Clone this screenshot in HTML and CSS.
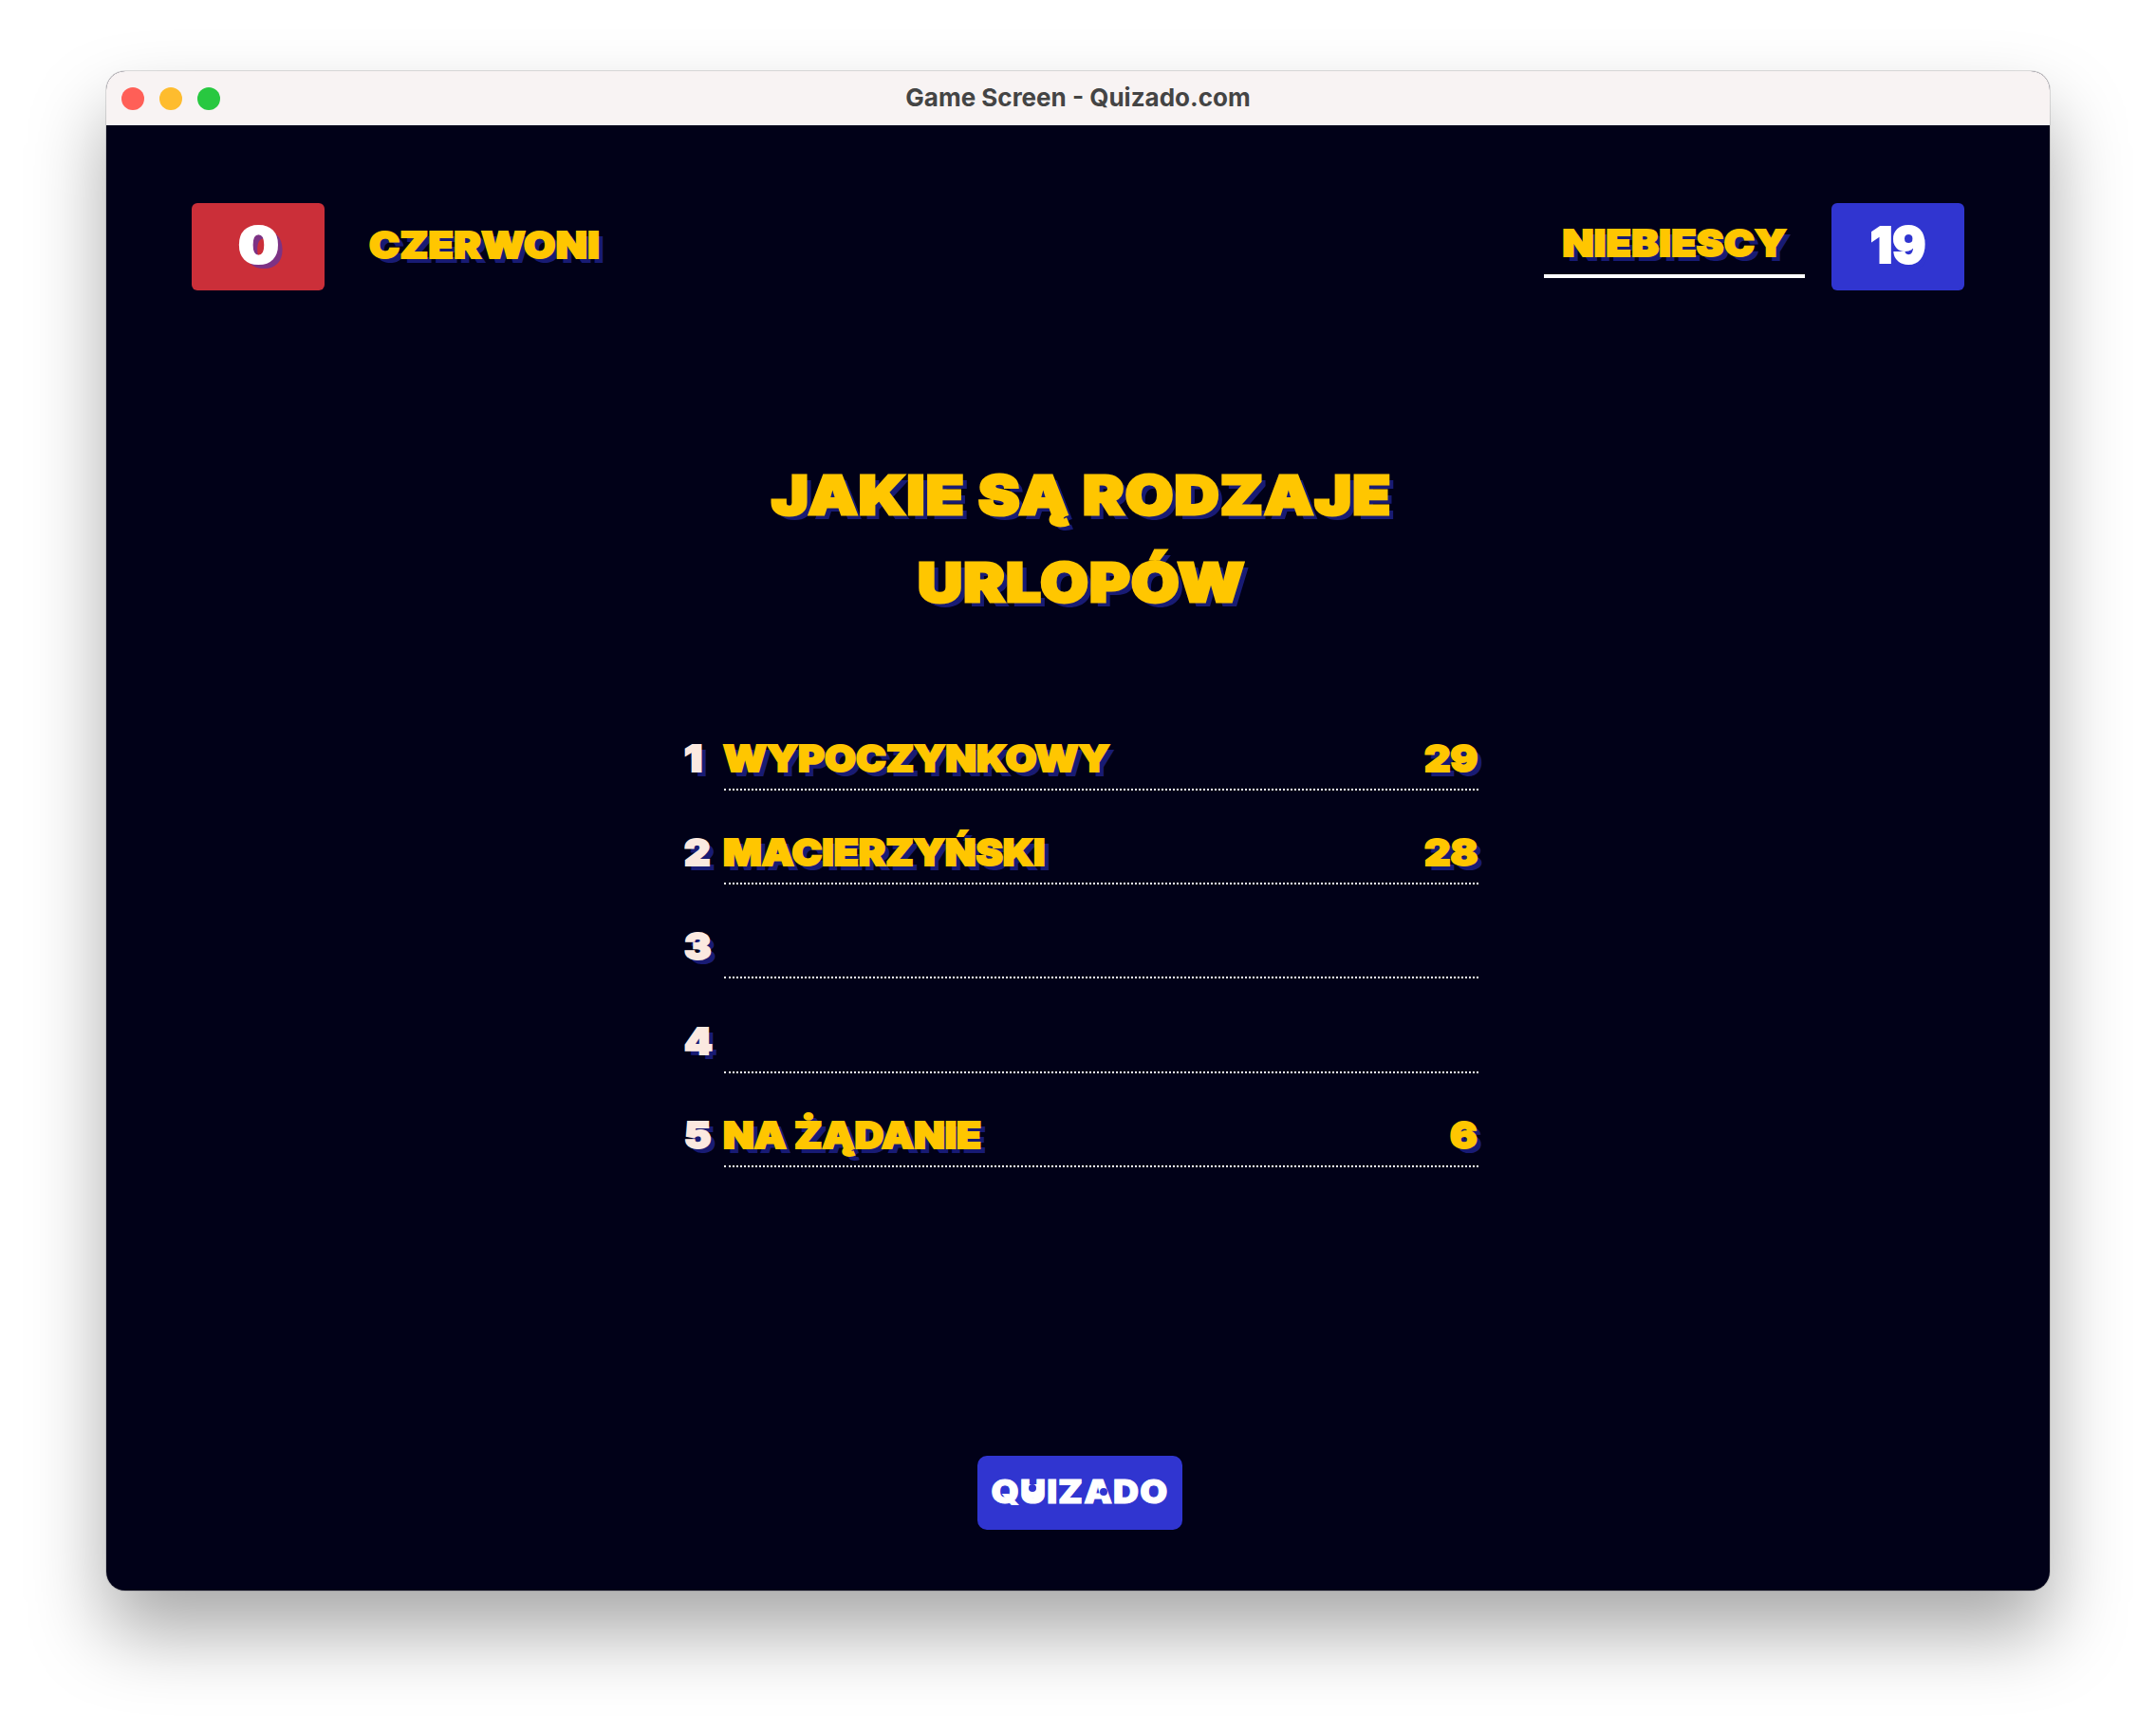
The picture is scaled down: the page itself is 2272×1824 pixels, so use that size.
FILE: index.html
```html
<!DOCTYPE html>
<html lang="pl">
<head>
<meta charset="utf-8">
<title>Game Screen - Quizado.com</title>
<link rel="stylesheet" href="styles.css">
</head>
<body>
<div class="window">
  <header class="titlebar">
    <div class="lights">
      <span class="light light-red"></span>
      <span class="light light-yellow"></span>
      <span class="light light-green"></span>
    </div>
    <div class="window-title">Game Screen - Quizado.com</div>
  </header>
  <main class="game">
    <section class="teams">
      <div class="team">
        <div class="score score-red"><span class="zero">0</span></div>
        <div class="team-name team-left"><span class="wide">CZERWONI</span></div>
      </div>
      <div class="team">
        <div class="team-name team-right"><span class="wide wide-center">NIEBIESCY</span></div>
        <div class="score score-blue">19</div>
      </div>
    </section>
    <h1 class="question">JAKIE SĄ RODZAJE<br>URLOPÓW</h1>
    <ol class="answers">
      <li class="answer"><span class="num">1</span><span class="line"><span class="text">WYPOCZYNKOWY</span><span class="pts">29</span></span></li>
      <li class="answer"><span class="num">2</span><span class="line"><span class="text">MACIERZYŃSKI</span><span class="pts">28</span></span></li>
      <li class="answer"><span class="num">3</span><span class="line"></span></li>
      <li class="answer"><span class="num">4</span><span class="line"></span></li>
      <li class="answer"><span class="num">5</span><span class="line"><span class="text">NA ŻĄDANIE</span><span class="pts">6</span></span></li>
    </ol>
    <div class="logo-wrap">
      <div class="logo"><span class="logo-text">QUIZADO</span><i class="patch"></i><i class="dot dot-u"></i><i class="dot dot-a"></i></div>
    </div>
  </main>
</div>
</body>
</html>
```
FILE: styles.css
```css
* { box-sizing: border-box; }
html, body { margin: 0; background: #fff; }
body {
  width: 2272px;
  height: 1824px;
  padding: 75px 112px 148px;
  font-family: Inter, "Liberation Sans", sans-serif;
  overflow: hidden;
}
.window {
  width: 2048px;
  height: 1601px;
  border-radius: 20px;
  overflow: hidden;
  display: flex;
  flex-direction: column;
  background: #010118;
  box-shadow: 0 0 0 1px rgba(0,0,0,.12), 0 44px 80px rgba(0,0,0,.34);
}
.titlebar {
  height: 57px;
  background: #f8f3f3;
  display: flex;
  align-items: center;
  position: relative;
  flex: none;
}
.lights { display: flex; gap: 16px; padding-left: 16px; }
.light { width: 24px; height: 24px; border-radius: 50%; display: block; }
.light-red { background: #ff5f57; }
.light-yellow { background: #febc2e; }
.light-green { background: #28c840; }
.window-title {
  position: absolute;
  left: 0; right: 0; top: 0;
  line-height: 56px;
  text-align: center;
  font-size: 26px;
  font-weight: 700;
  color: #444;
}
.game { flex: 1; display: flex; flex-direction: column; padding: 82px 90px 0; }
.teams { display: flex; justify-content: space-between; }
.team { display: flex; align-items: center; }
.score {
  width: 140px;
  height: 92px;
  padding-bottom: 4px;
  border-radius: 6px;
  display: flex;
  align-items: center;
  justify-content: center;
  color: #fff;
  font-size: 52px;
  font-weight: 900;
  -webkit-text-stroke: 2px #fff;
  text-shadow: 5px 5px 0 rgba(48,53,208,.5);
}
.zero { display: inline-block; transform: scaleX(1.16); }
.score-red { background: #cb2f39; }
.score-blue { background: #3035d0; }
.team-name, .question, .text, .pts, .num {
  font-weight: 900;
  color: #ffc600;
  text-shadow: 5px 5px 0 rgba(48,53,208,.5);
  -webkit-text-stroke: 2px currentColor;
}
.team-name { font-size: 38px; line-height: 48px; }
.wide { display: inline-block; transform: scaleX(1.13); transform-origin: left center; letter-spacing: .3px; }
.wide-center { transform-origin: center; }
.team-left { margin-left: 47px; margin-bottom: 5px; }
.team-right {
  margin-right: 28px;
  width: 275px;
  height: 79px;
  padding-top: 18px;
  text-align: center;
  border-bottom: 4px solid #fff;
  align-self: flex-start;
}
.question {
  margin: 170px 0 0;
  padding-left: 7px;
  font-size: 57px;
  line-height: 92px;
  letter-spacing: 1px;
  text-align: center;
  -webkit-text-stroke-width: 3px;
  text-shadow: 5px 5px 0 rgba(48,53,208,.5);
  transform: scaleX(1.145);
  transform-origin: 936px center;
}
.answers {
  list-style: none;
  margin: 104px 0 0 519px;
  padding: 0;
  width: 837px;
}
.answer { display: flex; height: 99.2px; }
.num {
  width: 41px;
  font-size: 38px;
  line-height: 48px;
  color: #fbe9e0;
  flex: none;
  padding-top: 11px;
  height: 67px;
}
.num, .text { transform-origin: left center; transform: scaleX(1.12); }
.line {
  flex: 1;
  height: 69px;
  border-bottom: 2px dotted #fff;
  display: flex;
  justify-content: space-between;
  padding-top: 11px;
  margin-left: 1px;
}
.text, .pts { display: inline-block; height: 48px; font-size: 38px; line-height: 48px; }
.text { margin-left: -1px; }
.pts { transform-origin: right center; transform: scaleX(1.12); margin-right: 1px; }
.logo-wrap { margin-top: auto; padding: 0 0 64px 4px; display: flex; justify-content: center; }
.logo {
  position: relative;
  width: 216px;
  height: 78px;
  border-radius: 10px;
  background: #3035d0;
  color: #fff;
  font-size: 34px;
  font-weight: 900;
  letter-spacing: 1px;
  text-align: center;
  line-height: 76px;
  -webkit-text-stroke: 1px #fff;
}
.logo-text { display: inline-block; transform: scaleX(1.1); }
.patch { position: absolute; left: 51px; top: 30px; width: 14px; height: 14px; background: #fff; }
.dot { position: absolute; width: 8px; height: 8px; border-radius: 50%; background: #3035d0; }
.dot-u { left: 54px; top: 30px; }
.dot-a { left: 129px; top: 34px; }
```
